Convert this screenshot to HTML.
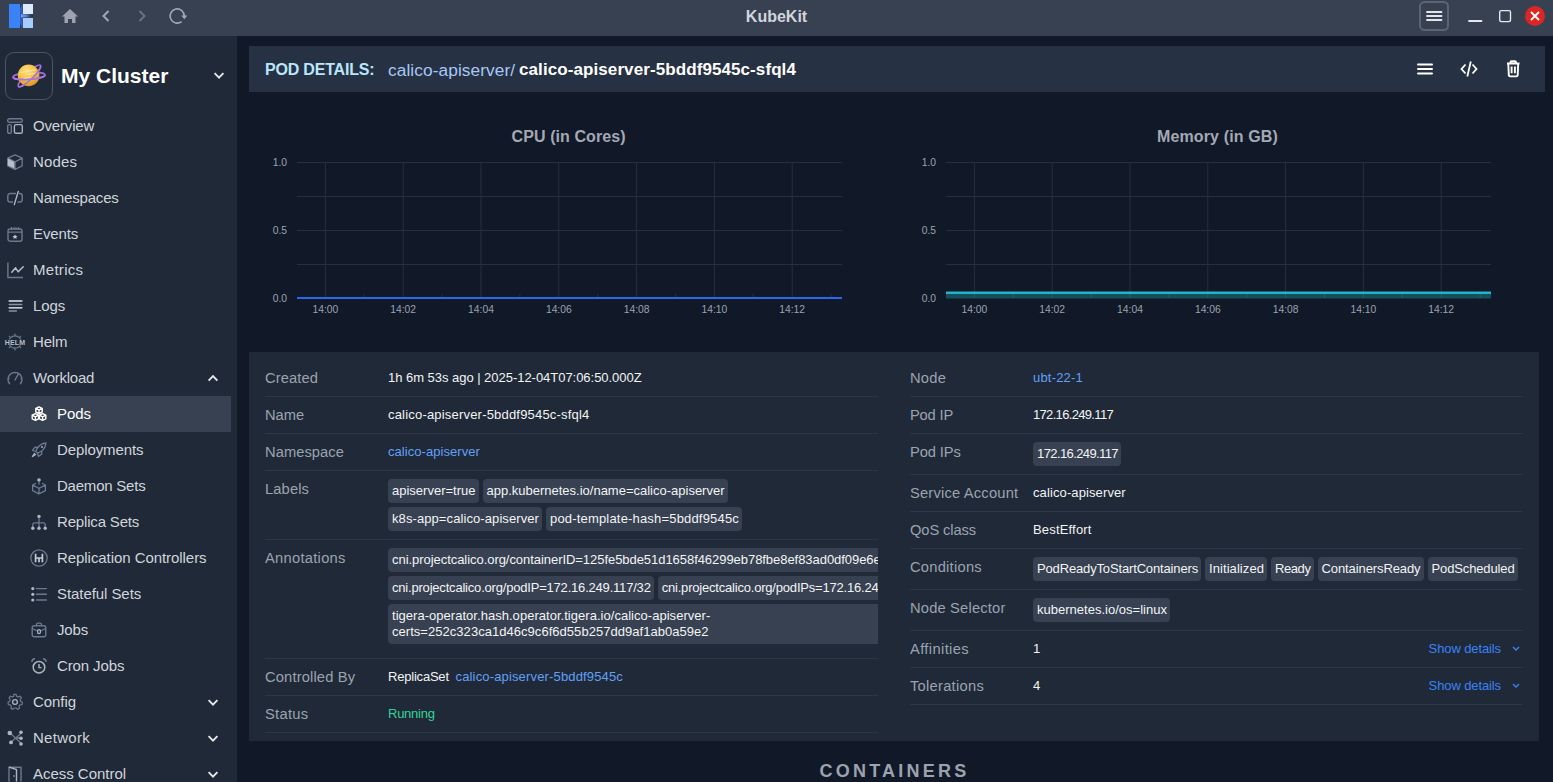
<!DOCTYPE html>
<html><head><meta charset="utf-8">
<style>
svg{overflow:visible}
*{box-sizing:border-box;margin:0;padding:0}
html,body{width:1553px;height:782px;overflow:hidden;background:#111827;font-family:"Liberation Sans",sans-serif;color:#e5e7eb}
.abs{position:absolute}
#tb{position:absolute;left:0;top:0;width:1553px;height:36px;background:#374151}
#sb{position:absolute;left:0;top:36px;width:237px;height:746px;background:#1f2937}
.nav{position:absolute;left:0;width:231px;height:36px}
.nav .t{position:absolute;left:33px;top:0;line-height:36px;font-size:15px;color:#d1d5db;white-space:nowrap}
.nav.sub .t{left:57px}
.nav svg{position:absolute}
.nav.act{background:#374151}
.nav.act .t{color:#fff}
.chev{position:absolute}

#hdr{position:absolute;left:249px;top:46px;width:1296px;height:46px;background:#263143}
.ht{position:absolute;top:60px;line-height:20px;white-space:nowrap}
.ctitle{position:absolute;top:127px;line-height:20px;font-size:16px;font-weight:700;color:#a3a9b4;white-space:nowrap}
#panel{position:absolute;left:249px;top:352px;width:1290px;height:389px;background:#1f2937}
.row{position:absolute;border-bottom:1px solid #2d3646}
.lbl{position:absolute;left:0;top:8px;line-height:20px;font-size:14.7px;color:#9ca3af;white-space:nowrap}
.val{position:absolute;left:123px;top:8px;line-height:20px;font-size:13px;color:#f3f4f6;white-space:nowrap}
.tags{position:absolute;left:123px;top:8px;right:0;overflow:hidden}
.tl{height:24px;margin-bottom:4px;white-space:nowrap}
.tag{display:inline-block;vertical-align:top;background:#374151;border-radius:4px;padding:4px;line-height:16px;font-size:13px;color:#f3f4f6;white-space:nowrap;margin-right:4px;overflow:hidden}
.link{color:#62a0f8}
.sd{position:absolute;right:22px;top:8px;line-height:20px;font-size:13px;color:#3b82f6;white-space:nowrap}
#cont{position:absolute;left:235px;width:1316px;top:759px;line-height:24px;text-align:center;font-size:18px;font-weight:700;letter-spacing:3.25px;color:#9ca3af;text-indent:3px}
</style></head><body>

<!-- TITLE BAR -->
<div id="tb">
  <svg class="abs" style="left:0;top:0" width="200" height="36" viewBox="0 0 200 36">
    <rect x="9" y="4" width="11" height="24" fill="#3b82f6"/>
    <rect x="23" y="4" width="10" height="10" fill="#dbeafe"/>
    <rect x="23" y="18" width="10" height="10" fill="#a5cdfc"/>
    <defs><linearGradient id="lg1" x1="0" x2="1" y1="0" y2="0"><stop offset="0" stop-color="#7f9ff7"/><stop offset="0.45" stop-color="#5a7fe0"/><stop offset="0.75" stop-color="#2d3f66"/><stop offset="1" stop-color="#26304a"/></linearGradient></defs>
    <path d="M20 8.6 L22.8 4 L22.8 28 L20 23.4Z" fill="#2f5fc0"/>
    <rect x="21" y="14.3" width="12" height="3" fill="url(#lg1)"/>
    <!-- home -->
    <path d="M70 9 L78 16.5 L75.5 16.5 L75.5 23 L72 23 L72 19 L68 19 L68 23 L64.5 23 L64.5 16.5 L62 16.5 Z" fill="#9ca3af"/>
    <!-- back -->
    <path d="M108.5 11 L103.5 16 L108.5 21" fill="none" stroke="#a3a9b4" stroke-width="2"/>
    <!-- forward -->
    <path d="M139.5 11 L144.5 16 L139.5 21" fill="none" stroke="#6b7280" stroke-width="2"/>
    <!-- refresh -->
    <path d="M181.6 21.6 A7.1 7.1 0 1 1 184.3 16.2" fill="none" stroke="#a3a9b4" stroke-width="1.6"/>
    <path d="M181.3 15.6 L187.4 15.6 L184.3 19.2 Z" fill="#a3a9b4"/>
  </svg>
  <div class="abs" style="left:0;width:1553px;top:1px;line-height:32px;text-align:center;font-weight:700;font-size:16px;color:#d1d5db">KubeKit</div>
  <svg class="abs" style="left:1400px;top:0" width="153" height="36" viewBox="0 0 153 36">
    <rect x="20" y="2" width="28" height="28" rx="4.5" fill="none" stroke="#5b6474" stroke-width="2"/>
    <path d="M27 12h14.5M27 16h14.5M27 20h14.5" stroke="#e1e4e8" stroke-width="1.9" stroke-linecap="round"/>
    <path d="M69 21h12.5" stroke="#e5e7eb" stroke-width="1.8" stroke-linecap="round"/>
    <rect x="99.7" y="10.6" width="10.8" height="11" rx="1.5" fill="none" stroke="#e5e7eb" stroke-width="1.4"/>
    <circle cx="135" cy="16" r="10" fill="#dc2626"/>
    <path d="M131 12l8 8M139 12l-8 8" stroke="#fff" stroke-width="1.8"/>
  </svg>
</div>

<!-- SIDEBAR -->
<div id="sb">
  <div class="abs" style="left:5px;top:16px;width:48px;height:48px;border:1px solid #4b5563;border-radius:9px"></div>
  <svg class="abs" style="left:5px;top:16px" width="48" height="48" viewBox="5 52 48 48">
    <defs><radialGradient id="pg" cx="0.4" cy="0.3" r="0.8"><stop offset="0" stop-color="#ffe08a"/><stop offset="0.55" stop-color="#f3bd3a"/><stop offset="1" stop-color="#d98a1c"/></radialGradient>
    <clipPath id="c1" clipPathUnits="userSpaceOnUse"><rect x="0" y="76" width="60" height="30"/></clipPath>
    <clipPath id="c2" clipPathUnits="userSpaceOnUse"><rect x="0" y="75.9" width="60" height="30"/></clipPath></defs>
    <g fill="none" stroke="#9d6ad8" stroke-width="1.7">
      <ellipse cx="29" cy="76" rx="16" ry="3.4" transform="rotate(-4 29 76)"/>
      <ellipse cx="29.4" cy="75.9" rx="15.2" ry="3.6" transform="rotate(-44 29.4 75.9)"/>
    </g>
    <circle cx="28.6" cy="75.4" r="10.8" fill="url(#pg)"/>
    <path d="M26.5 71.5 L35 69.8 M28 74.5 L36.5 73 M20 72.5 L23.5 71.8 M24 78.5 L30 77.5" stroke="#ffeeb5" stroke-width="1.2" stroke-linecap="round" opacity="0.75"/>
    <g fill="none" stroke="#a874e0" stroke-width="1.7">
      <g transform="rotate(-4 29 76)"><ellipse cx="29" cy="76" rx="16" ry="3.4" clip-path="url(#c1)"/></g>
      <g transform="rotate(-44 29.4 75.9)"><ellipse cx="29.4" cy="75.9" rx="15.2" ry="3.6" clip-path="url(#c2)"/></g>
    </g>
  </svg>
  <div class="abs" style="left:61px;top:22px;line-height:36px;font-size:21px;font-weight:700;color:#fff;white-space:nowrap">My Cluster</div>

  <svg class="chev" style="left:213px;top:36px" width="12" height="8" viewBox="0 0 12 8"><path d="M1.6 1.2 L6 5.6 L10.4 1.2" fill="none" stroke="#e5e7eb" stroke-width="1.9"/></svg>
  <div class="nav" style="top:72px"><svg style="left:7px;top:10px" width="16" height="16" viewBox="0 0 16 16"><rect x="0.7" y="0.7" width="14.6" height="3.6" rx="1.6" fill="none" stroke="#6b7a90" stroke-width="1.4"/><rect x="0.7" y="6.6" width="3.6" height="8.7" rx="1.4" fill="none" stroke="#6b7a90" stroke-width="1.4"/><rect x="7.4" y="6.6" width="7.9" height="8.7" rx="1.6" fill="none" stroke="#aab1bd" stroke-width="1.4"/></svg><div class="t" style="letter-spacing:-0.171px">Overview</div></div>
  <div class="nav" style="top:108px"><svg style="left:7px;top:10px" width="16" height="16" viewBox="0 0 16 16"><path d="M8 0.8 L15.2 4.2 L15.2 11.8 L8 15.4 L0.8 11.8 L0.8 4.2 Z M0.8 4.2 L8 7.8 L15.2 4.2 M8 7.8 L8 15.4" fill="none" stroke="#6b7a90" stroke-width="1.3" stroke-linejoin="round"/><path d="M0.8 4.6 L7.4 8 L7.4 14.6 L0.8 11.5Z" fill="#b9bfca"/></svg><div class="t" style="letter-spacing:0.175px">Nodes</div></div>
  <div class="nav" style="top:144px"><svg style="left:7px;top:10px" width="16" height="16" viewBox="0 0 16 16"><path d="M9 3.5 H3 A2.2 2.2 0 0 0 0.8 5.7 V9.8 A2.2 2.2 0 0 0 3 12 H6 M10.5 12 H13 A2.2 2.2 0 0 0 15.2 9.8 V5.7 A2.2 2.2 0 0 0 13 3.5 H12" fill="none" stroke="#6b7a90" stroke-width="1.4"/><path d="M11.3 1.3 L7.3 14.6" stroke="#b9bfca" stroke-width="1.3" stroke-linecap="round"/></svg><div class="t" style="letter-spacing:-0.189px">Namespaces</div></div>
  <div class="nav" style="top:180px"><svg style="left:7px;top:10px" width="16" height="16" viewBox="0 0 16 16"><rect x="1" y="3" width="14" height="12.2" rx="2" fill="none" stroke="#6b7a90" stroke-width="1.4"/><path d="M1 6.2 H15 M4.5 1 V4 M11.5 1 V4 M6 2.2 H10" stroke="#6b7a90" stroke-width="1.3"/><path d="M8 8.3 L8.8 10 L10.6 10.1 L9.2 11.2 L9.7 13 L8 12 L6.3 13 L6.8 11.2 L5.4 10.1 L7.2 10 Z" fill="#c4cad3"/></svg><div class="t" style="letter-spacing:-0.120px">Events</div></div>
  <div class="nav" style="top:216px"><svg style="left:7px;top:10px" width="16" height="16" viewBox="0 0 16 16"><path d="M0.9 0.5 V15.5 H16" fill="none" stroke="#6b7a90" stroke-width="1.4"/><path d="M4.8 10.2 L8.6 5.8 L11.2 9.8 L16.2 4.7" fill="none" stroke="#b9bfca" stroke-width="1.5" stroke-linecap="round" stroke-linejoin="round"/></svg><div class="t" style="letter-spacing:0.283px">Metrics</div></div>
  <div class="nav" style="top:252px"><svg style="left:7px;top:10px" width="16" height="16" viewBox="0 0 16 16"><path d="M2.3 2.9 H14.8 M2.3 6.4 H14.8 M2.3 9.8 H14.8 M2.3 13.1 H9.4" stroke="#8a93a3" stroke-width="1.5" stroke-linecap="round"/><path d="M2.3 2.9 H14.8 M2.3 9.8 H14.8" stroke="#c4cad3" stroke-width="1.5" stroke-linecap="round"/></svg><div class="t" style="letter-spacing:-0.067px">Logs</div></div>
  <div class="nav" style="top:288px"><svg style="left:5px;top:8px" width="20" height="20" viewBox="0 0 20 20"><circle cx="10" cy="10" r="6.2" fill="none" stroke="#6b7a90" stroke-width="1.2"/><path d="M10 1.5 V3.8 M10 16.2 V18.5 M4 4 L5.6 5.6 M16 4 L14.4 5.6 M4 16 L5.6 14.4 M16 16 L14.4 14.4" stroke="#6b7a90" stroke-width="1.2"/><rect x="1" y="7.6" width="18" height="5.6" fill="#1f2937"/><text x="10" y="13" text-anchor="middle" font-family="Liberation Sans" font-weight="700" font-size="7" fill="#b9bfca" letter-spacing="0.2">HELM</text></svg><div class="t" style="letter-spacing:-0.167px">Helm</div></div>
  <div class="nav" style="top:324px"><svg style="left:7px;top:10px" width="16" height="16" viewBox="0 0 16 16"><path d="M2.6 13.8 A7 7 0 1 1 13.4 13.8" fill="none" stroke="#6b7a90" stroke-width="1.4" stroke-linecap="round"/><path d="M8 10 L11.6 3.6" stroke="#6b7a90" stroke-width="1.4" stroke-linecap="round"/><path d="M14.6 8.6 L13.4 8.6 M2.6 8.6 L1.4 8.6 M8 2 V3.4" stroke="#6b7a90" stroke-width="1.2"/></svg><div class="t" style="letter-spacing:-0.243px">Workload</div><svg class="chev" style="left:207px;top:14px" width="12" height="8" viewBox="0 0 12 8"><path d="M1.6 6.6 L6 2.2 L10.4 6.6" fill="none" stroke="#e5e7eb" stroke-width="1.9"/></svg></div>
  <div class="nav sub act" style="top:360px"><svg style="left:31px;top:10px" width="16" height="16" viewBox="0 0 16 16"><g fill="none" stroke="#fff" stroke-width="1.4" stroke-linejoin="round"><path d="M8 0.8 L11.2 2.4 L11.2 6 L8 7.6 L4.8 6 L4.8 2.4Z M4.8 2.4 L8 4 L11.2 2.4 M8 4 V7.6"/><path d="M4.4 7.6 L7.6 9.2 L7.6 12.8 L4.4 14.4 L1.2 12.8 L1.2 9.2Z M1.2 9.2 L4.4 10.8 L7.6 9.2 M4.4 10.8 V14.4"/><path d="M11.6 7.6 L14.8 9.2 L14.8 12.8 L11.6 14.4 L8.4 12.8 L8.4 9.2Z M8.4 9.2 L11.6 10.8 L14.8 9.2 M11.6 10.8 V14.4"/></g></svg><div class="t" style="letter-spacing:-0.067px">Pods</div></div>
  <div class="nav sub" style="top:396px"><svg style="left:31px;top:10px" width="16" height="16" viewBox="0 0 16 16"><path d="M15 1 C10 1.5 6.5 4.5 4.8 9.5 L6.5 11.2 C11.5 9.5 14.5 6 15 1Z" fill="none" stroke="#6b7a90" stroke-width="1.3" stroke-linejoin="round"/><path d="M4.8 9.5 L1.5 8.5 L4 5.2 L7 5.5 M6.5 11.2 L7.5 14.5 L10.8 12 L10.5 9" fill="none" stroke="#6b7a90" stroke-width="1.3" stroke-linejoin="round"/><circle cx="11" cy="5" r="1.1" fill="#9aa3b1"/><path d="M3.8 11 L1.2 14.8 L5 12.2" fill="none" stroke="#aeb5c0" stroke-width="1.3"/></svg><div class="t" style="letter-spacing:-0.100px">Deployments</div></div>
  <div class="nav sub" style="top:432px"><svg style="left:31px;top:10px" width="16" height="16" viewBox="0 0 16 16"><circle cx="8" cy="2" r="1.8" fill="#aeb5c0"/><path d="M8 3.6 V6.5" stroke="#6b7a90" stroke-width="1.3"/><path d="M5 5.2 L1.6 7 V12.6 L8 15.8 L14.4 12.6 V7 L11 5.2 M1.6 7 L8 10.3 L14.4 7 M8 10.3 V15.8" fill="none" stroke="#6b7a90" stroke-width="1.3" stroke-linejoin="round"/></svg><div class="t" style="letter-spacing:-0.220px">Daemon Sets</div></div>
  <div class="nav sub" style="top:468px"><svg style="left:31px;top:10px" width="16" height="16" viewBox="0 0 16 16"><circle cx="8" cy="2.4" r="1.7" fill="#aeb5c0"/><path d="M8 4 V14 M1.8 14 V10.6 A1.8 1.8 0 0 1 3.6 8.8 H12.4 A1.8 1.8 0 0 1 14.2 10.6 V14" fill="none" stroke="#6b7a90" stroke-width="1.3"/><circle cx="1.8" cy="14.2" r="1.7" fill="#aeb5c0"/><circle cx="8" cy="14.2" r="1.7" fill="#aeb5c0"/><circle cx="14.2" cy="14.2" r="1.7" fill="#aeb5c0"/></svg><div class="t" style="letter-spacing:-0.173px">Replica Sets</div></div>
  <div class="nav sub" style="top:504px"><svg style="left:31px;top:10px" width="16" height="16" viewBox="0 0 16 16"><circle cx="8" cy="8" r="8.2" fill="none" stroke="#6b7a90" stroke-width="1.3"/><path d="M4.6 3.8 V12.2 M4.6 8 H11.4 M8 8 V12.2 M11.4 3.8 V12.2" stroke="#c4cad3" stroke-width="1.7"/></svg><div class="t" style="letter-spacing:-0.060px">Replication Controllers</div></div>
  <div class="nav sub" style="top:540px"><svg style="left:31px;top:10px" width="16" height="16" viewBox="0 0 16 16"><circle cx="1.8" cy="2.6" r="1.6" fill="#aeb5c0"/><circle cx="1.8" cy="8.3" r="1.6" fill="#aeb5c0"/><circle cx="1.8" cy="14" r="1.6" fill="#aeb5c0"/><path d="M5.5 2.6 H15.4 M5.5 8.3 H15.4 M5.5 14 H15.4" stroke="#6b7a90" stroke-width="1.4" stroke-linecap="round"/></svg><div class="t" style="letter-spacing:-0.067px">Stateful Sets</div></div>
  <div class="nav sub" style="top:576px"><svg style="left:31px;top:10px" width="16" height="16" viewBox="0 0 16 16"><rect x="1.2" y="3.8" width="13.6" height="11" rx="2" fill="none" stroke="#6b7a90" stroke-width="1.4"/><path d="M5.5 3.8 V2.6 A1.4 1.4 0 0 1 6.9 1.2 H9.1 A1.4 1.4 0 0 1 10.5 2.6 V3.8 M1.2 6.5 L6.5 9 M14.8 6.5 L9.5 9" fill="none" stroke="#6b7a90" stroke-width="1.3"/><rect x="6.6" y="7.6" width="2.8" height="4" rx="1.4" fill="none" stroke="#aeb5c0" stroke-width="1.2"/></svg><div class="t" style="letter-spacing:-0.167px">Jobs</div></div>
  <div class="nav sub" style="top:612px"><svg style="left:31px;top:10px" width="16" height="16" viewBox="0 0 16 16"><circle cx="8" cy="9.2" r="5.8" fill="none" stroke="#aeb5c0" stroke-width="1.5"/><path d="M8 6 V9.6 H10.6" fill="none" stroke="#aeb5c0" stroke-width="1.4"/><path d="M0.8 4 A3.5 3.5 0 0 1 4 0.8 M12 0.8 A3.5 3.5 0 0 1 15.2 4" fill="none" stroke="#6b7a90" stroke-width="1.5"/></svg><div class="t" style="letter-spacing:-0.113px">Cron Jobs</div></div>
  <div class="nav" style="top:648px"><svg style="left:7px;top:10px" width="16" height="16" viewBox="0 0 16 16"><path d="M6.8 0.8 H9.2 L9.6 2.8 L11.2 3.6 L13 2.6 L14.4 4.4 L13.2 6.1 L13.6 7.9 L15.4 8.8 L15 11.1 L13 11.4 L12 12.9 L12.6 14.8 L10.6 15.9 L9.2 14.5 L7.2 14.5 L5.8 15.9 L3.8 14.8 L4.4 12.9 L3.4 11.4 L1.4 11.1 L1 8.8 L2.8 7.9 L3.2 6.1 L2 4.4 L3.4 2.6 L5.2 3.6 L6.8 2.8Z" fill="none" stroke="#6b7a90" stroke-width="1.2" stroke-linejoin="round" transform="translate(0,-0.5)"/><circle cx="8" cy="8" r="2.4" fill="none" stroke="#aeb5c0" stroke-width="1.3"/></svg><div class="t" style="letter-spacing:-0.060px">Config</div><svg class="chev" style="left:207px;top:15px" width="12" height="8" viewBox="0 0 12 8"><path d="M1.6 1.2 L6 5.6 L10.4 1.2" fill="none" stroke="#e5e7eb" stroke-width="1.9"/></svg></div>
  <div class="nav" style="top:684px"><svg style="left:7px;top:10px" width="16" height="16" viewBox="0 0 16 16"><path d="M3 3 L14.5 13.5 M3 13 L14.5 3 M8 8 H14.5" stroke="#6b7a90" stroke-width="1.3"/><circle cx="2.8" cy="3" r="2.3" fill="#aeb5c0"/><circle cx="14" cy="2.2" r="1.8" fill="#aeb5c0"/><circle cx="14" cy="8.2" r="1.8" fill="#aeb5c0"/><circle cx="14" cy="14" r="1.8" fill="#aeb5c0"/><circle cx="4" cy="12.4" r="1.9" fill="#aeb5c0"/></svg><div class="t" style="letter-spacing:0.283px">Network</div><svg class="chev" style="left:207px;top:15px" width="12" height="8" viewBox="0 0 12 8"><path d="M1.6 1.2 L6 5.6 L10.4 1.2" fill="none" stroke="#e5e7eb" stroke-width="1.9"/></svg></div>
  <div class="nav" style="top:720px"><svg style="left:7px;top:10px" width="16" height="16" viewBox="0 0 16 16"><path d="M2 15.5 V1.2 H14 V15.5" fill="none" stroke="#6b7a90" stroke-width="1.4"/><path d="M2 1.2 L9.5 3.5 V15.5" fill="none" stroke="#aeb5c0" stroke-width="1.4"/><circle cx="7" cy="10" r="0.8" fill="#aeb5c0"/></svg><div class="t" style="letter-spacing:-0.025px">Acess Control</div><svg class="chev" style="left:207px;top:15px" width="12" height="8" viewBox="0 0 12 8"><path d="M1.6 1.2 L6 5.6 L10.4 1.2" fill="none" stroke="#e5e7eb" stroke-width="1.9"/></svg></div>
</div>

<!-- MAIN -->
<div id="hdr"></div>
<div id="t1" class="ht" style="left:265px;font-size:16px;font-weight:700;color:#bae6fd;letter-spacing:-0.200px">POD DETAILS:</div>
<div id="t2" class="ht" style="left:388px;font-size:17.3px;color:#a6c8f5;letter-spacing:0.082px">calico-apiserver/</div>
<div id="t3" class="ht" style="left:519px;font-size:17px;font-weight:700;color:#fff;letter-spacing:0.090px">calico-apiserver-5bddf9545c-sfql4</div>
<svg class="abs" style="left:1400px;top:46px" width="145" height="46" viewBox="0 0 145 46">
  <path d="M18 18.5h14M18 23h14M18 27.5h14" stroke="#fff" stroke-width="2" stroke-linecap="round"/>
  <path d="M65.5 18.5 L61.5 23 L65.5 27.5 M72.5 18.5 L76.5 23 L72.5 27.5 M70.8 15.5 L67.3 30.5" fill="none" stroke="#fff" stroke-width="1.8" stroke-linejoin="miter"/>
  <path d="M107 17.5 H119.5 M110.5 17.5 V16.2 Q110.5 15.2 111.5 15.2 H115 Q116 15.2 116 16.2 V17.5 M108.3 17.5 L108.8 29.2 Q108.9 30.4 110.1 30.4 H116.4 Q117.6 30.4 117.7 29.2 L118.2 17.5 M111.6 20.5 V27.2 M114.9 20.5 V27.2" fill="none" stroke="#fff" stroke-width="1.9"/>
</svg>
<div id="t4" class="ctitle" style="left:511.6px;letter-spacing:0.078px">CPU (in Cores)</div>
<svg class="abs" style="left:0;top:0" width="1553" height="782"><line x1="297" y1="162.5" x2="842" y2="162.5" stroke="#263040" stroke-width="1"/><line x1="297" y1="196.5" x2="842" y2="196.5" stroke="#263040" stroke-width="1"/><line x1="297" y1="230.5" x2="842" y2="230.5" stroke="#263040" stroke-width="1"/><line x1="297" y1="264.5" x2="842" y2="264.5" stroke="#263040" stroke-width="1"/><line x1="325.4" y1="162" x2="325.4" y2="298" stroke="#263040" stroke-width="1"/><line x1="403.2" y1="162" x2="403.2" y2="298" stroke="#263040" stroke-width="1"/><line x1="481.0" y1="162" x2="481.0" y2="298" stroke="#263040" stroke-width="1"/><line x1="558.8" y1="162" x2="558.8" y2="298" stroke="#263040" stroke-width="1"/><line x1="636.6" y1="162" x2="636.6" y2="298" stroke="#263040" stroke-width="1"/><line x1="714.4" y1="162" x2="714.4" y2="298" stroke="#263040" stroke-width="1"/><line x1="792.2" y1="162" x2="792.2" y2="298" stroke="#263040" stroke-width="1"/><text x="287" y="165.8" text-anchor="end" font-family="Liberation Sans" font-size="10.3" fill="#9ca3af">1.0</text><text x="287" y="233.8" text-anchor="end" font-family="Liberation Sans" font-size="10.3" fill="#9ca3af">0.5</text><text x="287" y="301.8" text-anchor="end" font-family="Liberation Sans" font-size="10.3" fill="#9ca3af">0.0</text><text x="325.4" y="313" text-anchor="middle" font-family="Liberation Sans" font-size="10.3" fill="#9ca3af">14:00</text><text x="403.2" y="313" text-anchor="middle" font-family="Liberation Sans" font-size="10.3" fill="#9ca3af">14:02</text><text x="481.0" y="313" text-anchor="middle" font-family="Liberation Sans" font-size="10.3" fill="#9ca3af">14:04</text><text x="558.8" y="313" text-anchor="middle" font-family="Liberation Sans" font-size="10.3" fill="#9ca3af">14:06</text><text x="636.6" y="313" text-anchor="middle" font-family="Liberation Sans" font-size="10.3" fill="#9ca3af">14:08</text><text x="714.4" y="313" text-anchor="middle" font-family="Liberation Sans" font-size="10.3" fill="#9ca3af">14:10</text><text x="792.2" y="313" text-anchor="middle" font-family="Liberation Sans" font-size="10.3" fill="#9ca3af">14:12</text><line x1="364.3" y1="294" x2="364.3" y2="298" stroke="#263040" stroke-width="1"/><line x1="442.1" y1="294" x2="442.1" y2="298" stroke="#263040" stroke-width="1"/><line x1="519.9" y1="294" x2="519.9" y2="298" stroke="#263040" stroke-width="1"/><line x1="597.7" y1="294" x2="597.7" y2="298" stroke="#263040" stroke-width="1"/><line x1="675.5" y1="294" x2="675.5" y2="298" stroke="#263040" stroke-width="1"/><line x1="753.3" y1="294" x2="753.3" y2="298" stroke="#263040" stroke-width="1"/><line x1="831.1" y1="294" x2="831.1" y2="298" stroke="#263040" stroke-width="1"/><line x1="297" y1="298" x2="842" y2="298" stroke="#2868f0" stroke-width="2"/></svg>
<div id="t5" class="ctitle" style="left:1157px;letter-spacing:0.134px">Memory (in GB)</div>
<svg class="abs" style="left:0;top:0" width="1553" height="782"><line x1="946" y1="162.5" x2="1491" y2="162.5" stroke="#263040" stroke-width="1"/><line x1="946" y1="196.5" x2="1491" y2="196.5" stroke="#263040" stroke-width="1"/><line x1="946" y1="230.5" x2="1491" y2="230.5" stroke="#263040" stroke-width="1"/><line x1="946" y1="264.5" x2="1491" y2="264.5" stroke="#263040" stroke-width="1"/><line x1="974.4" y1="162" x2="974.4" y2="298" stroke="#263040" stroke-width="1"/><line x1="1052.2" y1="162" x2="1052.2" y2="298" stroke="#263040" stroke-width="1"/><line x1="1130.0" y1="162" x2="1130.0" y2="298" stroke="#263040" stroke-width="1"/><line x1="1207.8" y1="162" x2="1207.8" y2="298" stroke="#263040" stroke-width="1"/><line x1="1285.6" y1="162" x2="1285.6" y2="298" stroke="#263040" stroke-width="1"/><line x1="1363.4" y1="162" x2="1363.4" y2="298" stroke="#263040" stroke-width="1"/><line x1="1441.2" y1="162" x2="1441.2" y2="298" stroke="#263040" stroke-width="1"/><text x="936" y="165.8" text-anchor="end" font-family="Liberation Sans" font-size="10.3" fill="#9ca3af">1.0</text><text x="936" y="233.8" text-anchor="end" font-family="Liberation Sans" font-size="10.3" fill="#9ca3af">0.5</text><text x="936" y="301.8" text-anchor="end" font-family="Liberation Sans" font-size="10.3" fill="#9ca3af">0.0</text><text x="974.4" y="313" text-anchor="middle" font-family="Liberation Sans" font-size="10.3" fill="#9ca3af">14:00</text><text x="1052.2" y="313" text-anchor="middle" font-family="Liberation Sans" font-size="10.3" fill="#9ca3af">14:02</text><text x="1130.0" y="313" text-anchor="middle" font-family="Liberation Sans" font-size="10.3" fill="#9ca3af">14:04</text><text x="1207.8" y="313" text-anchor="middle" font-family="Liberation Sans" font-size="10.3" fill="#9ca3af">14:06</text><text x="1285.6" y="313" text-anchor="middle" font-family="Liberation Sans" font-size="10.3" fill="#9ca3af">14:08</text><text x="1363.4" y="313" text-anchor="middle" font-family="Liberation Sans" font-size="10.3" fill="#9ca3af">14:10</text><text x="1441.2" y="313" text-anchor="middle" font-family="Liberation Sans" font-size="10.3" fill="#9ca3af">14:12</text><rect x="946" y="292.5" width="545" height="6" fill="#164e5c"/><line x1="1013.3" y1="294" x2="1013.3" y2="298" stroke="#27606e" stroke-width="1"/><line x1="1091.1" y1="294" x2="1091.1" y2="298" stroke="#27606e" stroke-width="1"/><line x1="1168.9" y1="294" x2="1168.9" y2="298" stroke="#27606e" stroke-width="1"/><line x1="1246.7" y1="294" x2="1246.7" y2="298" stroke="#27606e" stroke-width="1"/><line x1="1324.5" y1="294" x2="1324.5" y2="298" stroke="#27606e" stroke-width="1"/><line x1="1402.3" y1="294" x2="1402.3" y2="298" stroke="#27606e" stroke-width="1"/><line x1="1480.1" y1="294" x2="1480.1" y2="298" stroke="#27606e" stroke-width="1"/><line x1="974.4" y1="292" x2="974.4" y2="298" stroke="#27606e" stroke-width="1"/><line x1="1052.2" y1="292" x2="1052.2" y2="298" stroke="#27606e" stroke-width="1"/><line x1="1130.0" y1="292" x2="1130.0" y2="298" stroke="#27606e" stroke-width="1"/><line x1="1207.8" y1="292" x2="1207.8" y2="298" stroke="#27606e" stroke-width="1"/><line x1="1285.6" y1="292" x2="1285.6" y2="298" stroke="#27606e" stroke-width="1"/><line x1="1363.4" y1="292" x2="1363.4" y2="298" stroke="#27606e" stroke-width="1"/><line x1="1441.2" y1="292" x2="1441.2" y2="298" stroke="#27606e" stroke-width="1"/><line x1="946" y1="292.8" x2="1491" y2="292.8" stroke="#1fb6cc" stroke-width="2.4"/></svg>
<div id="panel"><div class="row" style="left:16px;top:8px;width:613px;height:37px"><div id="t21" class="lbl" style=";letter-spacing:0.105px">Created</div><div id="t6" class="val" style=";letter-spacing:-0.032px">1h 6m 53s ago | 2025-12-04T07:06:50.000Z</div></div>
<div class="row" style="left:16px;top:45px;width:613px;height:37px"><div id="t22" class="lbl" style=";letter-spacing:-0.022px">Name</div><div id="t7" class="val" style=";letter-spacing:0.194px">calico-apiserver-5bddf9545c-sfql4</div></div>
<div class="row" style="left:16px;top:82px;width:613px;height:37px"><div id="t23" class="lbl" style=";letter-spacing:0.069px">Namespace</div><div id="t8" class="val link" style=";letter-spacing:0.060px">calico-apiserver</div></div>
<div class="row" style="left:16px;top:119px;width:613px;height:69px"><div id="t24" class="lbl" style=";letter-spacing:0.136px">Labels</div><div class="tags"><div class="tl"><span id="t9" class="tag" style="width:90.5px;;letter-spacing:0.002px">apiserver=true</span><span id="t10" class="tag" style="width:245px;;letter-spacing:-0.003px">app.kubernetes.io/name=calico-apiserver</span></div><div class="tl"><span id="t11" class="tag" style="width:154px;;letter-spacing:0.089px">k8s-app=calico-apiserver</span><span id="t12" class="tag" style="width:196px;;letter-spacing:0.180px">pod-template-hash=5bddf9545c</span></div></div></div>
<div class="row" style="left:16px;top:188px;width:613px;height:119px"><div id="t25" class="lbl" style=";letter-spacing:0.284px">Annotations</div><div class="tags"><div class="tl"><span id="t13" class="tag" style="letter-spacing:-0.05px">cni.projectcalico.org/containerID=125fe5bde51d1658f46299eb78fbe8ef83ad0df09e6e4c</span></div><div class="tl"><span id="t14" class="tag" style="width:265.7px;;letter-spacing:-0.197px">cni.projectcalico.org/podIP=172.16.249.117/32</span><span id="t15" class="tag" style="letter-spacing:-0.2px">cni.projectcalico.org/podIPs=172.16.249.117/32</span></div><div class="tl" style="height:40px"><span class="tag" style="width:640px;white-space:normal"><span id="t16" class="" style=";letter-spacing:0.031px">tigera-operator.hash.operator.tigera.io/calico-apiserver-</span><br><span id="t17" class="" style=";letter-spacing:0.039px">certs=252c323ca1d46c9c6f6d55b257dd9af1ab0a59e2</span></span></div></div></div>
<div class="row" style="left:16px;top:307px;width:613px;height:37px"><div id="t26" class="lbl" style=";letter-spacing:0.156px">Controlled By</div><div class="val"><span id="t18" class="" style=";letter-spacing:-0.208px">ReplicaSet</span><span id="t19" class="link" style="position:absolute;left:67.5px;top:0;letter-spacing:0.155px">calico-apiserver-5bddf9545c</span></div></div>
<div class="row" style="left:16px;top:344px;width:613px;height:37px"><div id="t27" class="lbl" style=";letter-spacing:0.277px">Status</div><div id="t20" class="val" style="color:#34d399;letter-spacing:-0.248px">Running</div></div>
<div class="row" style="left:661px;top:8px;width:613px;height:37px"><div id="t43" class="lbl" style=";letter-spacing:0.244px">Node</div><div id="t28" class="val link" style=";letter-spacing:0.197px">ubt-22-1</div></div>
<div class="row" style="left:661px;top:45px;width:613px;height:37px"><div id="t44" class="lbl" style=";letter-spacing:-0.182px">Pod IP</div><div id="t29" class="val" style=";letter-spacing:-0.672px">172.16.249.117</div></div>
<div class="row" style="left:661px;top:82px;width:613px;height:41px"><div id="t45" class="lbl" style=";letter-spacing:-0.105px">Pod IPs</div><div class="tags"><div class="tl"><span id="t30" class="tag" style="width:88px;;letter-spacing:-0.600px">172.16.249.117</span></div></div></div>
<div class="row" style="left:661px;top:123px;width:613px;height:37px"><div id="t46" class="lbl" style=";letter-spacing:0.198px">Service Account</div><div id="t31" class="val" style=";letter-spacing:0.110px">calico-apiserver</div></div>
<div class="row" style="left:661px;top:160px;width:613px;height:37px"><div id="t47" class="lbl" style=";letter-spacing:-0.093px">QoS class</div><div id="t32" class="val" style=";letter-spacing:0.176px">BestEffort</div></div>
<div class="row" style="left:661px;top:197px;width:613px;height:41px"><div id="t48" class="lbl" style=";letter-spacing:0.249px">Conditions</div><div class="tags"><div class="tl"><span id="t33" class="tag" style="width:168px;;letter-spacing:-0.151px">PodReadyToStartContainers</span><span id="t34" class="tag" style="width:62px;;letter-spacing:0.072px">Initialized</span><span id="t35" class="tag" style="width:42.5px;;letter-spacing:-0.416px">Ready</span><span id="t36" class="tag" style="width:106px;;letter-spacing:-0.097px">ContainersReady</span><span id="t37" class="tag" style="width:90px;margin-right:0;letter-spacing:-0.132px">PodScheduled</span></div></div></div>
<div class="row" style="left:661px;top:238px;width:613px;height:41px"><div id="t49" class="lbl" style=";letter-spacing:0.186px">Node Selector</div><div class="tags"><div class="tl"><span id="t38" class="tag" style="width:137px;;letter-spacing:0.012px">kubernetes.io/os=linux</span></div></div></div>
<div class="row" style="left:661px;top:279px;width:613px;height:37px"><div id="t50" class="lbl" style=";letter-spacing:0.375px">Affinities</div><div id="t39" class="val" style="">1</div><div id="t40" class="sd" style=";letter-spacing:-0.110px">Show details</div><svg class="abs" style="right:3px;top:15px" width="8" height="6" viewBox="0 0 8 6"><path d="M1 1 L4 4 L7 1" fill="none" stroke="#3b82f6" stroke-width="1.4"/></svg></div>
<div class="row" style="left:661px;top:316px;width:613px;height:37px"><div id="t51" class="lbl" style=";letter-spacing:0.270px">Tolerations</div><div id="t41" class="val" style="">4</div><div id="t42" class="sd" style=";letter-spacing:-0.110px">Show details</div><svg class="abs" style="right:3px;top:15px" width="8" height="6" viewBox="0 0 8 6"><path d="M1 1 L4 4 L7 1" fill="none" stroke="#3b82f6" stroke-width="1.4"/></svg></div></div>
<div id="cont">CONTAINERS</div>
</body></html>
